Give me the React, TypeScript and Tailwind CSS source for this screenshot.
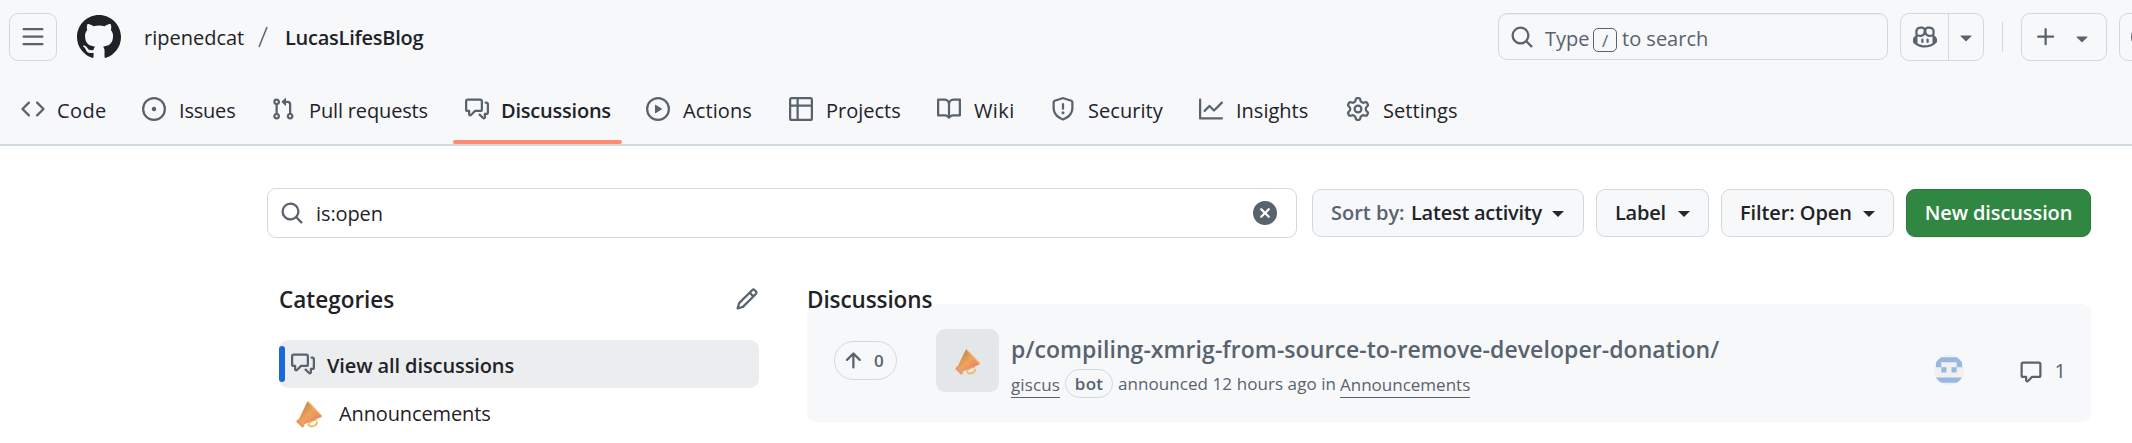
import type { ReactNode } from "react";

const icons = {
  bars: "M1 2.75A.75.75 0 0 1 1.75 2h12.5a.75.75 0 0 1 0 1.5H1.75A.75.75 0 0 1 1 2.75Zm0 5A.75.75 0 0 1 1.75 7h12.5a.75.75 0 0 1 0 1.5H1.75A.75.75 0 0 1 1 7.75ZM1.75 12h12.5a.75.75 0 0 1 0 1.5H1.75a.75.75 0 0 1 0-1.5Z",
  github: "M8 0c4.42 0 8 3.58 8 8a8.013 8.013 0 0 1-5.45 7.59c-.4.08-.55-.17-.55-.38 0-.27.01-1.13.01-2.2 0-.75-.25-1.23-.54-1.48 1.78-.2 3.65-.88 3.65-3.95 0-.88-.31-1.59-.82-2.15.08-.2.36-1.02-.08-2.12 0 0-.67-.22-2.2.82-.64-.18-1.32-.27-2-.27-.68 0-1.36.09-2 .27-1.53-1.03-2.2-.82-2.2-.82-.44 1.1-.16 1.92-.08 2.12-.51.56-.82 1.28-.82 2.15 0 3.06 1.86 3.75 3.64 3.95-.23.2-.44.55-.51 1.07-.46.21-1.61.55-2.33-.66-.15-.24-.6-.83-1.23-.82-.67.01-.27.38.01.53.34.19.73.9.82 1.13.16.45.68 1.31 2.69.94 0 .67.01 1.3.01 1.49 0 .21-.15.45-.55.38A7.995 7.995 0 0 1 0 8c0-4.42 3.58-8 8-8Z",
  code: "m11.28 3.22 4.25 4.25a.75.75 0 0 1 0 1.06l-4.25 4.25a.749.749 0 0 1-1.275-.326.749.749 0 0 1 .215-.734L13.94 8l-3.72-3.72a.749.749 0 0 1 .326-1.275.749.749 0 0 1 .734.215Zm-6.56 0a.751.751 0 0 1 1.042.018.751.751 0 0 1 .018 1.042L2.06 8l3.72 3.72a.749.749 0 0 1-.326 1.275.749.749 0 0 1-.734-.215L.47 8.53a.75.75 0 0 1 0-1.06Z",
  issue: "M8 9.5a1.5 1.5 0 1 0 0-3 1.5 1.5 0 0 0 0 3ZM8 0a8 8 0 1 1 0 16A8 8 0 0 1 8 0ZM1.5 8a6.5 6.5 0 1 0 13 0 6.5 6.5 0 0 0-13 0Z",
  pull: "M1.5 3.25a2.25 2.25 0 1 1 3 2.122v5.256a2.251 2.251 0 1 1-1.5 0V5.372A2.25 2.25 0 0 1 1.5 3.25Zm5.677-.177L9.573.677A.25.25 0 0 1 10 .854V2.5h1A2.5 2.5 0 0 1 13.5 5v5.628a2.251 2.251 0 1 1-1.5 0V5a1 1 0 0 0-1-1h-1v1.646a.25.25 0 0 1-.427.177L7.177 3.427a.25.25 0 0 1 0-.354ZM3.75 2.5a.75.75 0 1 0 0 1.5.75.75 0 0 0 0-1.5Zm0 9.5a.75.75 0 1 0 0 1.5.75.75 0 0 0 0-1.5Zm8.25.75a.75.75 0 1 0 1.5 0 .75.75 0 0 0-1.5 0Z",
  discussion: "M1.75 1h8.5c.966 0 1.75.784 1.75 1.75v5.5A1.75 1.75 0 0 1 10.25 10H7.061l-2.574 2.573A1.458 1.458 0 0 1 2 11.543V10h-.25A1.75 1.75 0 0 1 0 8.25v-5.5C0 1.784.784 1 1.75 1ZM1.5 2.75v5.5c0 .138.112.25.25.25h1a.75.75 0 0 1 .75.75v2.19l2.72-2.72a.749.749 0 0 1 .53-.22h3.5a.25.25 0 0 0 .25-.25v-5.5a.25.25 0 0 0-.25-.25h-8.5a.25.25 0 0 0-.25.25Zm13 2a.25.25 0 0 0-.25-.25h-.5a.75.75 0 0 1 0-1.5h.5c.966 0 1.75.784 1.75 1.75v5.5A1.75 1.75 0 0 1 14.25 12H14v1.543a1.458 1.458 0 0 1-2.487 1.03L9.22 12.28a.749.749 0 0 1 .326-1.275.749.749 0 0 1 .734.215l2.22 2.22v-2.19a.75.75 0 0 1 .75-.75h1a.25.25 0 0 0 .25-.25Z",
  play: "M8 0a8 8 0 1 1 0 16A8 8 0 0 1 8 0ZM1.5 8a6.5 6.5 0 1 0 13 0 6.5 6.5 0 0 0-13 0Zm4.879-2.773 4.264 2.559a.25.25 0 0 1 0 .428l-4.264 2.559A.25.25 0 0 1 6 10.559V5.442a.25.25 0 0 1 .379-.215Z",
  table: "M0 1.75C0 .784.784 0 1.75 0h12.5C15.216 0 16 .784 16 1.75v12.5A1.75 1.75 0 0 1 14.25 16H1.75A1.75 1.75 0 0 1 0 14.25ZM6.5 6.5v8h7.75a.25.25 0 0 0 .25-.25V6.5Zm8-1.5V1.75a.25.25 0 0 0-.25-.25H6.5V5Zm-13 1.5v7.75c0 .138.112.25.25.25H5v-8ZM5 5V1.5H1.75a.25.25 0 0 0-.25.25V5Z",
  book: "M0 1.75A.75.75 0 0 1 .75 1h4.253c1.227 0 2.317.59 3 1.501A3.743 3.743 0 0 1 11.006 1h4.245a.75.75 0 0 1 .75.75v10.5a.75.75 0 0 1-.75.75h-4.507a2.25 2.25 0 0 0-1.591.659l-.622.621a.75.75 0 0 1-1.06 0l-.622-.621A2.25 2.25 0 0 0 5.258 13H.75a.75.75 0 0 1-.75-.75Zm7.251 10.324.004-5.073-.002-2.253A2.25 2.25 0 0 0 5.003 2.5H1.5v9h3.757a3.75 3.75 0 0 1 1.994.574ZM8.755 4.75l-.004 7.322a3.752 3.752 0 0 1 1.992-.572H14.5v-9h-3.495a2.25 2.25 0 0 0-2.25 2.25Z",
  shield: "M7.467.133a1.748 1.748 0 0 1 1.066 0l5.25 1.68A1.75 1.75 0 0 1 15 3.48V7c0 1.566-.32 3.182-1.303 4.682-.983 1.498-2.585 2.813-5.032 3.855a1.697 1.697 0 0 1-1.33 0c-2.447-1.042-4.049-2.357-5.032-3.855C1.32 10.182 1 8.566 1 7V3.48a1.75 1.75 0 0 1 1.217-1.667Zm.61 1.429a.25.25 0 0 0-.153 0l-5.25 1.68a.25.25 0 0 0-.174.238V7c0 1.358.275 2.666 1.057 3.86.784 1.194 2.121 2.34 4.366 3.297a.196.196 0 0 0 .154 0c2.245-.956 3.582-2.104 4.366-3.298C13.225 9.666 13.5 8.36 13.5 7V3.48a.251.251 0 0 0-.174-.237l-5.25-1.68ZM8.75 4.75v3a.75.75 0 0 1-1.5 0v-3a.75.75 0 0 1 1.5 0ZM9 10.5a1 1 0 1 1-2 0 1 1 0 0 1 2 0Z",
  graph: "M1.5 1.75V13.5h13.75a.75.75 0 0 1 0 1.5H.75a.75.75 0 0 1-.75-.75V1.75a.75.75 0 0 1 1.5 0Zm14.28 2.53-5.25 5.25a.75.75 0 0 1-1.06 0L7 7.06 4.28 9.78a.751.751 0 0 1-1.042-.018.751.751 0 0 1-.018-1.042l3.25-3.25a.75.75 0 0 1 1.06 0L10 7.94l4.72-4.72a.751.751 0 0 1 1.042.018.751.751 0 0 1 .018 1.042Z",
  gear: "M8 0a8.2 8.2 0 0 1 .701.031C9.444.095 9.99.645 10.16 1.29l.288 1.107c.018.066.079.158.212.224.231.114.454.243.668.386.123.082.233.09.299.071l1.103-.303c.644-.176 1.392.021 1.82.63.27.385.506.792.704 1.218.315.675.111 1.422-.364 1.891l-.814.806c-.049.048-.098.147-.088.294.016.257.016.515 0 .772-.01.147.038.246.088.294l.814.806c.475.469.679 1.216.364 1.891a7.977 7.977 0 0 1-.704 1.217c-.428.61-1.176.807-1.82.63l-1.102-.302c-.067-.019-.177-.011-.3.071a5.909 5.909 0 0 1-.668.386c-.133.066-.194.158-.211.224l-.29 1.106c-.168.646-.715 1.196-1.458 1.26a8.006 8.006 0 0 1-1.402 0c-.743-.064-1.289-.614-1.458-1.26l-.289-1.106c-.018-.066-.079-.158-.212-.224a5.738 5.738 0 0 1-.668-.386c-.123-.082-.233-.09-.299-.071l-1.103.303c-.644.176-1.392-.021-1.82-.63a8.12 8.12 0 0 1-.704-1.218c-.315-.675-.111-1.422.363-1.891l.815-.806c.05-.048.098-.147.088-.294a6.214 6.214 0 0 1 0-.772c.01-.147-.038-.246-.088-.294l-.815-.806C.635 6.045.431 5.298.746 4.623a7.92 7.92 0 0 1 .704-1.217c.428-.61 1.176-.807 1.82-.63l1.102.302c.067.019.177.011.3-.071.214-.143.437-.272.668-.386.133-.066.194-.158.211-.224l.29-1.106C6.009.645 6.556.095 7.299.03 7.53.01 7.764 0 8 0Zm-.571 1.525c-.036.003-.108.036-.137.146l-.289 1.105c-.147.561-.549.967-.998 1.189-.173.086-.34.183-.5.29-.417.278-.97.423-1.529.27l-1.103-.303c-.109-.03-.175.016-.195.045-.22.312-.412.644-.573.99-.014.031-.021.11.059.19l.815.806c.411.406.562.957.53 1.456a4.709 4.709 0 0 0 0 .582c.032.499-.119 1.05-.53 1.456l-.815.806c-.081.08-.073.159-.059.19.162.346.353.677.573.989.02.03.085.076.195.046l1.102-.303c.56-.153 1.113-.008 1.53.27.161.107.328.204.501.29.447.222.85.629.997 1.189l.289 1.105c.029.109.101.143.137.146a6.6 6.6 0 0 0 1.142 0c.036-.003.108-.036.137-.146l.289-1.105c.147-.561.549-.967.998-1.189.173-.086.34-.183.5-.29.417-.278.97-.423 1.529-.27l1.103.303c.109.029.175-.016.195-.045.22-.313.411-.644.573-.99.014-.031.021-.11-.059-.19l-.815-.806c-.411-.406-.562-.957-.53-1.456a4.709 4.709 0 0 0 0-.582c-.032-.499.119-1.05.53-1.456l.815-.806c.081-.08.073-.159.059-.19a6.464 6.464 0 0 0-.573-.989c-.02-.03-.085-.076-.195-.046l-1.102.303c-.56.153-1.113.008-1.53-.27a4.44 4.44 0 0 0-.501-.29c-.447-.222-.85-.629-.997-1.189l-.289-1.105c-.029-.11-.101-.143-.137-.146a6.6 6.6 0 0 0-1.142 0ZM11 8a3 3 0 1 1-6 0 3 3 0 0 1 6 0ZM9.5 8a1.5 1.5 0 1 0-3.001.001A1.5 1.5 0 0 0 9.5 8Z",
  search: "M10.68 11.74a6 6 0 0 1-7.922-8.982 6 6 0 0 1 8.982 7.922l3.04 3.04a.749.749 0 0 1-.326 1.275.749.749 0 0 1-.734-.215ZM11.5 7a4.499 4.499 0 1 0-8.997 0A4.499 4.499 0 0 0 11.5 7Z",
  pencil: "M11.013 1.427a1.75 1.75 0 0 1 2.474 0l1.086 1.086a1.75 1.75 0 0 1 0 2.474l-8.61 8.61c-.21.21-.47.364-.756.445l-3.251.93a.75.75 0 0 1-.927-.928l.929-3.25c.081-.286.235-.547.445-.758l8.61-8.61Zm.176 4.823L9.75 4.81l-6.286 6.287a.253.253 0 0 0-.064.108l-.558 1.953 1.953-.558a.253.253 0 0 0 .108-.064Zm1.238-3.763a.25.25 0 0 0-.354 0L10.811 3.75l1.439 1.44 1.263-1.263a.25.25 0 0 0 0-.354Z",
  arrowUp: "M3.47 7.78a.75.75 0 0 1 0-1.06l4.25-4.25a.75.75 0 0 1 1.06 0l4.25 4.25a.751.751 0 0 1-.018 1.042.751.751 0 0 1-1.042.018L9 4.81v7.44a.75.75 0 0 1-1.5 0V4.81L4.53 7.78a.75.75 0 0 1-1.06 0Z",
  comment: "M1 2.75C1 1.784 1.784 1 2.75 1h10.5c.966 0 1.75.784 1.75 1.75v7.5A1.75 1.75 0 0 1 13.25 12H9.06l-2.573 2.573A1.458 1.458 0 0 1 4 13.543V12H2.75A1.75 1.75 0 0 1 1 10.25Zm1.75-.25a.25.25 0 0 0-.25.25v7.5c0 .138.112.25.25.25h2a.75.75 0 0 1 .75.75v2.19l2.72-2.72a.749.749 0 0 1 .53-.22h4.5a.25.25 0 0 0 .25-.25v-7.5a.25.25 0 0 0-.25-.25Z",
  clear: "M2.343 13.657A8 8 0 1 1 13.658 2.343 8 8 0 0 1 2.343 13.657ZM6.03 4.97a.751.751 0 0 0-1.042.018.751.751 0 0 0-.018 1.042L6.94 8 4.97 9.97a.749.749 0 0 0 .326 1.275.749.749 0 0 0 .734-.215L8 9.06l1.97 1.97a.749.749 0 0 0 1.275-.326.749.749 0 0 0-.215-.734L9.06 8l1.97-1.97a.749.749 0 0 0-.326-1.275.749.749 0 0 0-.734.215L8 6.94Z",
  triangle: "m4.427 7.427 3.396 3.396a.25.25 0 0 0 .354 0l3.396-3.396A.25.25 0 0 0 11.396 7H4.604a.25.25 0 0 0-.177.427Z",
  plus: "M7.75 2a.75.75 0 0 1 .75.75V7h4.25a.75.75 0 0 1 0 1.5H8.5v4.25a.75.75 0 0 1-1.5 0V8.5H2.75a.75.75 0 0 1 0-1.5H7V2.75A.75.75 0 0 1 7.75 2Z",
  copilot: "M7.998 15.035c-4.562 0-7.873-2.914-7.998-3.749V9.338c.085-.628.677-1.686 1.588-2.065.013-.07.024-.143.036-.218.029-.183.06-.384.126-.612-.201-.508-.254-1.084-.254-1.656 0-.87.128-1.769.693-2.484.579-.733 1.494-1.124 2.724-1.261 1.206-.134 2.262.034 2.944.765.05.053.096.108.139.165.044-.057.094-.112.143-.165.682-.731 1.738-.899 2.944-.765 1.23.137 2.145.528 2.724 1.261.566.715.693 1.614.693 2.484 0 .572-.053 1.148-.254 1.656.066.228.098.429.126.612.012.076.024.148.037.218.924.385 1.522 1.471 1.591 2.095v1.872c0 .766-3.351 3.795-8.002 3.795Zm0-1.485c2.28 0 4.584-1.11 5.002-1.433V7.862l-.023-.116c-.49.21-1.075.291-1.727.291-1.146 0-2.059-.327-2.71-.991A3.222 3.222 0 0 1 8 6.303a3.24 3.24 0 0 1-.544.743c-.65.664-1.563.991-2.71.991-.652 0-1.236-.081-1.727-.291l-.023.116v4.255c.419.323 2.722 1.433 5.002 1.433ZM6.762 2.83c-.193-.206-.637-.413-1.682-.297-1.019.113-1.479.404-1.713.7-.247.312-.369.789-.369 1.554 0 .793.129 1.171.308 1.371.162.181.519.379 1.442.379.853 0 1.339-.235 1.638-.54.315-.322.527-.827.617-1.553.117-.935-.037-1.395-.241-1.614Zm4.155-.297c-1.044-.116-1.488.091-1.681.297-.204.219-.359.679-.242 1.614.091.726.303 1.231.618 1.553.299.305.784.54 1.638.54.922 0 1.28-.198 1.442-.379.179-.2.308-.578.308-1.371 0-.765-.123-1.242-.37-1.554-.233-.296-.693-.587-1.713-.7ZM6.25 9.037a.75.75 0 0 1 .75.75v1.501a.75.75 0 0 1-1.5 0V9.787a.75.75 0 0 1 .75-.75Zm4.25.75v1.501a.75.75 0 0 1-1.5 0V9.787a.75.75 0 0 1 1.5 0Z",
};

type IconName = keyof typeof icons;

function Icon({ name, className = "size-6 text-[#59636e]" }: { name: IconName; className?: string }) {
  return (
    <svg viewBox="0 0 16 16" fill="currentColor" className={"shrink-0 " + className}>
      <path d={icons[name]} />
    </svg>
  );
}

function Caret({ className = "" }: { className?: string }) {
  return (
    <svg viewBox="0 0 12 6" fill="#25292e" className={"h-[6px] w-3 shrink-0 " + className}>
      <path d="M0 0H12L6 6Z" />
    </svg>
  );
}

function Megaphone({ className }: { className: string }) {
  return (
    <svg viewBox="0 0 26 27" className={"shrink-0 " + className}>
      <defs>
        <linearGradient id="horn" x1="0.15" y1="0.2" x2="0.8" y2="0.85">
          <stop offset="0" stopColor="#c08a4a" />
          <stop offset="0.5" stopColor="#f0a35c" />
          <stop offset="1" stopColor="#ea8468" />
        </linearGradient>
      </defs>
      <path d="M12.5 23c0 3.600 8 3.600 8.600-2.500" fill="none" stroke="#f3b75c" strokeWidth="1.900" />
      <path d="M12.500 23c.5-2.400 6-4.400 8.400-4" fill="none" stroke="#f3b75c" strokeWidth="1.500" />
      <path d="M12.300.8 25.400 14.600c.5.700.1 1.300-.7 1.700L8 23.500 2.800 18.300 10.900 1.400c.3-.7.900-1 1.400-.6Z" fill="url(#horn)" />
      <path d="M12.300.8 25.400 14.600c.5.700.1 1.300-.7 1.700" fill="none" stroke="#f7b96b" strokeWidth="1.200" />
      <path d="M2.300 18 8.300 24.200 6.600 26.500.5 20.700Z" fill="#f0946a" stroke="#e2a04f" strokeWidth=".8" strokeLinejoin="round" />
    </svg>
  );
}

const tabs: { label: string; icon: IconName; box: string; text: string; active?: boolean }[] = [
  { label: "Code", icon: "code", box: "w-[109px]", text: "ml-3 tracking-[0.4px]" },
  { label: "Issues", icon: "issue", box: "ml-3 w-[117px]", text: "ml-[13px] tracking-[-0.2px]" },
  { label: "Pull requests", icon: "pull", box: "ml-3 w-[182px]", text: "ml-3.5 tracking-[-0.15px]" },
  { label: "Discussions", icon: "discussion", box: "ml-3 w-[169px]", text: "ml-3 font-semibold tracking-[-0.22px]", active: true },
  { label: "Actions", icon: "play", box: "ml-3 w-[131px]", text: "ml-[13px] tracking-[0.1px]" },
  { label: "Projects", icon: "table", box: "ml-3 w-[136px]", text: "ml-[13px]" },
  { label: "Wiki", icon: "book", box: "ml-3 w-[102px]", text: "ml-[13px] tracking-[0.4px]" },
  { label: "Security", icon: "shield", box: "ml-3 w-[136px]", text: "ml-[13px] tracking-[0.05px]" },
  { label: "Insights", icon: "graph", box: "ml-3 w-[135px]", text: "ml-[13px]" },
  { label: "Settings", icon: "gear", box: "ml-3 w-[136px]", text: "ml-[13px] tracking-[0.05px]" },
];

function FilterButton({ children, className }: { children: ReactNode; className: string }) {
  return (
    <button
      className={
        "mt-px flex h-12 items-center rounded-[9px] border border-[#d1d9e0] bg-[#f6f8fa] pl-[18px] font-semibold " +
        className
      }
    >
      {children}
    </button>
  );
}

function Header() {
  return (
    <header className="flex h-[146px] flex-col border-b-2 border-[#d1d9e0] bg-[#f6f8fa]">
      <div className="flex h-[76px] items-center pl-[9px]">
        <button className="flex h-12 w-12 items-center justify-center rounded-[9px] border border-[#d1d9e0]">
          <Icon name="bars" />
        </button>
        <Icon name="github" className="ml-5 size-[44px] text-[#1f2328]" />
        <span className="ml-[23px] mt-0.5 w-[99px]">ripenedcat</span>
        <svg viewBox="0 0 10 22" className="ml-[15px] h-[22px] w-[10px]">
          <path d="M9 1 1 21" stroke="#59636e" strokeWidth="1.500" />
        </svg>
        <span className="ml-[17px] mt-0.5 font-semibold tracking-[-0.25px]">LucasLifesBlog</span>

        <div className="ml-auto flex shrink-0 items-center">
          <div className="mb-px flex h-[47px] w-[390px] items-center rounded-[9px] border border-[#d1d9e0] pl-[11px] text-[#59636e] shadow-[inset_0_1px_0_#e9ecf0]">
            <Icon name="search" />
            <span className="ml-[11px] mt-1 w-[48px]">Type</span>
            <kbd className="mt-[7px] flex h-6 w-6 items-center justify-center rounded-[5px] border border-[#59636e] font-['Open_Sans'] text-[17px] leading-none">
              /
            </kbd>
            <span className="ml-[5px] mt-1">to search</span>
          </div>
          <div className="ml-3 flex h-12 w-[84px] rounded-[9px] border border-[#d1d9e0]">
            <div className="flex w-12 items-center justify-center border-r border-[#d1d9e0]">
              <Icon name="copilot" />
            </div>
            <div className="flex flex-1 items-center justify-center">
              <Icon name="triangle" />
            </div>
          </div>
          <div className="ml-[18px] h-[30px] w-px bg-[#d1d9e0]" />
          <div className="ml-[18px] flex h-12 w-[86px] items-center rounded-[9px] border border-[#d1d9e0] pl-3">
            <Icon name="plus" />
            <Icon name="triangle" className="ml-3 mt-0.5 size-6 text-[#59636e]" />
          </div>
          <div className="ml-3 h-12 w-[13px] overflow-hidden">
            <div className="flex h-12 w-12 items-center rounded-[9px] border border-[#d1d9e0] pl-[11px]">
              <Icon name="issue" />
            </div>
          </div>
        </div>
      </div>

      <nav className="flex h-[70px] pl-[9px]">
        {tabs.map((t) => (
          <div key={t.label} className={"relative flex h-[68px] shrink-0 items-center pl-3 " + t.box}>
            <Icon name={t.icon} />
            <span className={"mt-[5px] whitespace-nowrap " + t.text}>{t.label}</span>
            {t.active && <span className="absolute -bottom-px left-0 h-1 w-full rounded-full bg-[#fd8c73]" />}
          </div>
        ))}
      </nav>
    </header>
  );
}

function Toolbar() {
  return (
    <div className="flex">
      <div className="flex h-[50px] w-[1030px] items-center rounded-[9px] border border-[#d1d9e0] pl-3">
        <Icon name="search" />
        <span className="ml-3 mt-0.5 flex-1 tracking-[-0.1px]">is:open</span>
        <Icon name="clear" className="mr-[19px] size-6 text-[#59636e]" />
      </div>
      <FilterButton className="ml-[15px] w-[272px]">
        <span className="w-20 text-left text-[#59636e]">Sort by:</span>
        <span className="w-[132px] whitespace-nowrap text-left tracking-[-0.25px]">Latest activity</span>
        <Caret className="ml-[9px] mt-0.5" />
      </FilterButton>
      <FilterButton className="ml-3 w-[113px]">
        <span className="w-[52px] text-left tracking-[-0.25px]">Label</span>
        <Caret className="ml-[11px] mt-0.5" />
      </FilterButton>
      <FilterButton className="ml-3 w-[173px]">
        <span className="w-[113px] whitespace-nowrap text-left tracking-[-0.1px]">Filter: Open</span>
        <Caret className="ml-[10px] mt-0.5" />
      </FilterButton>
      <button className="ml-3 mt-px flex h-12 w-[185px] items-center justify-center rounded-[9px] border border-[#2b7a3a] bg-[#308742] font-semibold tracking-[-0.1px] text-white shadow-[0_1px_1px_#1f232814]">
        New discussion
      </button>
    </div>
  );
}

function Categories() {
  return (
    <aside className="ml-3 w-[480px]">
      <div className="mt-[43px] flex h-9 items-center justify-between">
        <h2 className="mt-0.5 text-[22.5px] font-semibold leading-none">Categories</h2>
        <Icon name="pencil" />
      </div>
      <div className="mt-[23px] flex h-12 items-center rounded-[9px] bg-[#ecedef]">
        <span className="h-9 w-1.5 rounded-full bg-[#1968da]" />
        <Icon name="discussion" className="ml-1.5 size-6 text-[#59636e]" />
        <span className="ml-3 mt-[3px] font-semibold tracking-[-0.1px]">View all discussions</span>
      </div>
      <div className="flex h-[50px] items-center">
        <Megaphone className="ml-[17px] mt-0.5 h-[27px] w-[26px]" />
        <span className="ml-[17px] mt-px tracking-[-0.12px]">Announcements</span>
      </div>
    </aside>
  );
}

function Avatar() {
  return (
    <svg viewBox="0 0 30 30" className="size-[30px] shrink-0">
      <defs>
        <clipPath id="avatar">
          <circle cx="15" cy="15" r="15" />
        </clipPath>
      </defs>
      <g clipPath="url(#avatar)">
        <rect width="30" height="30" fill="#f0f0f0" />
        <path fill="#98b8e2" d="M2 2.200H28V12.300H22.700V7.300H7.300V12.300H2ZM7.300 12.300H12.500V17.400H7.300ZM17.500 12.300H22.700V17.400H17.500ZM2 22.500H28V27.700H2Z" />
      </g>
    </svg>
  );
}

function Discussions() {
  return (
    <section className="ml-12 w-[1284px]">
      <h2 className="relative z-10 mt-[45px] h-[21px] text-[22.5px] font-semibold leading-[34px] tracking-[-0.1px]">Discussions</h2>
      <div className="flex h-[118px] rounded-[9px] bg-[#f6f8fa] text-[#59636e]">
        <div className="ml-[27px] mt-[37px] flex h-[39px] w-[63px] items-center rounded-full border border-[#d1d9e0] pl-1.5 text-[17px] font-semibold">
          <Icon name="arrowUp" />
          <span className="ml-[9px] mt-px">0</span>
        </div>
        <div className="ml-[39px] mt-[25px] flex h-[63px] w-[63px] items-center justify-center rounded-[9px] bg-[#e3e7ea]">
          <Megaphone className="mt-0.5 h-[26px] w-[25px]" />
        </div>
        <div className="ml-3 mt-[29px]">
          <h3 className="h-8 whitespace-nowrap text-[23px] font-semibold leading-8 tracking-[0.07px]">
            p/compiling-xmrig-from-source-to-remove-developer-donation/
          </h3>
          <div className="mt-1 flex h-[29px] items-center text-[17px] leading-none">
            <span className="mt-[5px] h-6 w-[49px] whitespace-nowrap border-b border-[#59636e] leading-[21px] tracking-[0.1px]">giscus</span>
            <span className="ml-[5px] flex h-[29px] w-12 items-center justify-center rounded-full border border-[#d1d9e0] font-semibold tracking-[0.2px]">
              bot
            </span>
            <span className="ml-[5px] w-[222px] whitespace-nowrap tracking-[0.07px]">announced 12 hours ago in</span>
            <span className="mt-[5px] h-6 whitespace-nowrap border-b border-[#59636e] leading-[21px]">Announcements</span>
          </div>
        </div>
        <div className="ml-auto mr-[25px] mt-[51px] flex h-[30px] items-center">
          <Avatar />
          <Icon name="comment" className="ml-[55px] mt-1 size-6 text-[#59636e]" />
          <span className="ml-3 mt-0.5">1</span>
        </div>
      </div>
    </section>
  );
}

export default function App() {
  return (
    <div className="h-[443px] w-[2132px] overflow-hidden bg-white font-['Open_Sans','Noto_Sans',sans-serif] text-[20px] leading-7 text-[#1f2328]">
      <Header />
      <main className="pl-[267px] pt-[42px]">
        <Toolbar />
        <div className="flex">
          <Categories />
          <Discussions />
        </div>
      </main>
    </div>
  );
}
